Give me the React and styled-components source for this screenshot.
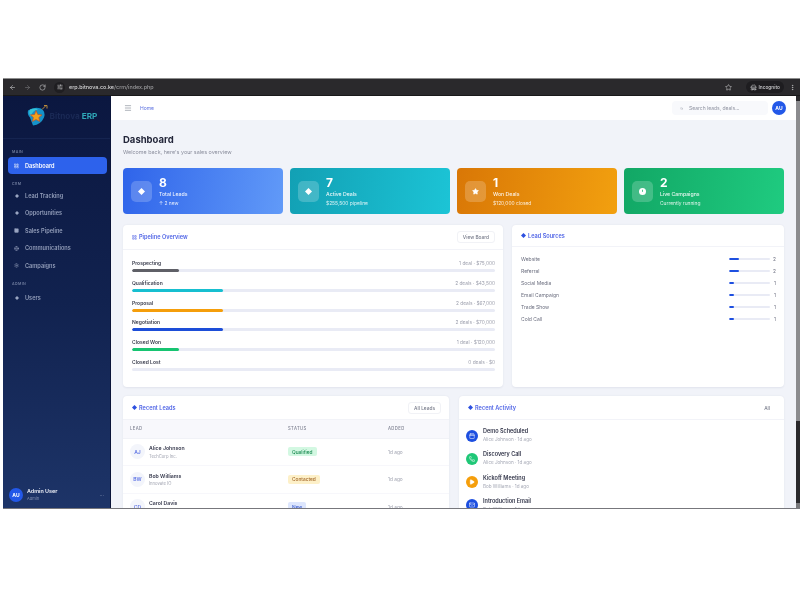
import styled, { createGlobalStyle } from 'styled-components'
import {
  ArrowLeft,
  ArrowRight,
  RotateCw,
  SlidersHorizontal,
  Star,
  HatGlasses,
  EllipsisVertical,
  LayoutGrid,
  Menu,
  Search,
  Play,
  Phone,
  Calendar,
  Mail,
  Globe,
  Settings,
  Square,
} from 'lucide-react'

const GlobalStyle = createGlobalStyle`
  html, body {
    margin: 0;
    background: #ffffff;
    font-family: Inter, "Liberation Sans", sans-serif;
  }
  * { box-sizing: border-box; }
`

const Screen = styled.div`
  width: 800px;
  height: 600px;
  padding: 78px 0 0 3px;
  overflow: hidden;
`

const Window = styled.div`
  width: 797px;
  height: 431px;
  display: flex;
  flex-direction: column;
  border-top: 1px solid #8d8d8d;
  border-bottom: 1px solid #77777c;
  overflow: hidden;
  filter: blur(0.35px);
`

const BrowserBar = styled.div`
  height: 17px;
  flex: none;
  display: flex;
  align-items: center;
  gap: 8px;
  padding: 0 4px 0 6px;
  background: #2a292c;
  border-bottom: 1px solid #19191a;
  color: #c9c9cb;
`

const NavIcon = styled.span`
  display: flex;
  width: 7px;
  color: ${(p) => (p.$dim ? '#77777a' : '#c9c9cb')};
`

const Address = styled.div`
  display: flex;
  align-items: center;
  gap: 4px;
  color: #d8d8da;
  font-size: 5.4px;
  font-weight: 500;
  flex: 1;
`

const SiteChip = styled.span`
  width: 11px;
  height: 11px;
  display: flex;
  align-items: center;
  justify-content: center;
  border-radius: 50%;
  background: #1f1e21;
`

const AddressPath = styled.span`
  color: #9a9a9d;
`

const IncognitoPill = styled.div`
  width: 38px;
  height: 12px;
  display: flex;
  align-items: center;
  gap: 2px;
  padding: 0 0 0 4px;
  margin: 0 -2.5px 0 5.5px;
  border-radius: 6px;
  background: #1e1d20;
  font-size: 4.8px;
  font-weight: 500;
  color: #d0d0d2;
  white-space: nowrap;

  svg {
    flex: none;
  }
`

const Body = styled.div`
  flex: 1;
  min-height: 0;
  display: flex;
`

const Sidebar = styled.aside`
  width: 108px;
  flex: none;
  display: flex;
  flex-direction: column;
  background: linear-gradient(180deg, #0b1740 0%, #11224f 50%, #1d3468 100%);
  border-right: 1px solid #0a1438;
`

const LogoRow = styled.div`
  height: 43px;
  flex: none;
  display: flex;
  align-items: center;
  justify-content: center;
  gap: 1px;
  padding: 0 0 3px 9px;
  border-bottom: 1px solid #152450;
`

const LogoText = styled.span`
  font-size: 8.2px;
  font-weight: 700;
  color: #1a2955;
`

const LogoAccent = styled.span`
  color: #2fa8b8;
`

const SectionLabel = styled.div`
  margin: ${(p) => p.$top}px 0 ${(p) => p.$bottom}px 9px;
  font-size: 3.6px;
  font-weight: 600;
  letter-spacing: 0.4px;
  color: #6f7c9e;
`

const NavList = styled.nav`
  display: flex;
  flex-direction: column;
  gap: 0.5px;
  padding: 0 3px 0 5px;
`

const NavItem = styled.div`
  height: 17px;
  display: flex;
  align-items: center;
  gap: 6px;
  padding-left: 6px;
  border-radius: 4px;
  font-size: 5.6px;
  font-weight: 600;
  color: ${(p) => (p.$active ? '#ffffff' : '#939eba')};
  background: ${(p) => (p.$active ? '#2d62ec' : 'transparent')};
`

const NavGlyph = styled.span`
  display: flex;
  width: 5px;
  justify-content: center;
`

const SidebarFoot = styled.div`
  margin-top: auto;
  height: 27px;
  display: flex;
  align-items: center;
  gap: 4px;
  padding: 0 6px;
`

const FootAvatar = styled.div`
  width: 14px;
  height: 14px;
  flex: none;
  border-radius: 50%;
  display: flex;
  align-items: center;
  justify-content: center;
  background: #2358e8;
  color: #ffffff;
  font-size: 5px;
  font-weight: 700;
`

const FootText = styled.div`
  flex: 1;
  display: flex;
  flex-direction: column;
  gap: 1.5px;
`

const FootName = styled.div`
  font-size: 5.4px;
  font-weight: 600;
  color: #eef1f8;
`

const FootRole = styled.div`
  font-size: 4px;
  color: #8492b4;
`

const FootDots = styled.div`
  font-size: 5px;
  color: #8492b4;
`

const Main = styled.main`
  flex: 1;
  min-width: 0;
  display: flex;
  flex-direction: column;
  background: #f1f3f9;
`

const TopBar = styled.header`
  height: 24px;
  flex: none;
  display: flex;
  align-items: center;
  gap: 4px;
  padding: 0 10px 0 13px;
  background: #ffffff;
  color: #8a8f9c;
`

const Crumb = styled.span`
  flex: 1;
  margin-left: 4px;
  font-size: 5px;
  color: #5a6fe0;
`

const SearchBox = styled.div`
  width: 96px;
  height: 14px;
  display: flex;
  align-items: center;
  gap: 6px;
  padding-left: 8px;
  border-radius: 4px;
  background: #f8f9fc;
  font-size: 5px;
  color: #8f93a1;
`

const Content = styled.div`
  flex: 1;
  min-height: 0;
  overflow: hidden;
  display: flex;
  flex-direction: column;
  padding: 14px 12px 0 12px;
`

const PageTitle = styled.h1`
  margin: 0;
  font-size: 9.5px;
  line-height: 12px;
  font-weight: 700;
  color: #23263a;
`

const PageSub = styled.p`
  margin: 3px 0 12px;
  font-size: 5.4px;
  line-height: 7px;
  color: #8a8d9c;
`

const StatGrid = styled.div`
  display: grid;
  grid-template-columns: repeat(4, 1fr);
  gap: 7px;
  margin-bottom: 11px;
`

const StatCard = styled.div`
  height: 46px;
  display: flex;
  align-items: center;
  gap: 7px;
  padding-left: 8px;
  border-radius: 4px;
  color: #ffffff;
  background: linear-gradient(100deg, ${(p) => p.$from}, ${(p) => p.$to});
`

const StatIcon = styled.div`
  width: 21px;
  height: 21px;
  flex: none;
  display: flex;
  align-items: center;
  justify-content: center;
  border-radius: 5px;
  background: rgba(255, 255, 255, 0.2);
`

const StatText = styled.div`
  display: flex;
  flex-direction: column;
`

const StatNumber = styled.div`
  font-size: 12px;
  line-height: 14px;
  font-weight: 700;
`

const StatLabel = styled.div`
  margin-top: 1px;
  font-size: 5.2px;
  line-height: 7px;
  font-weight: 500;
  opacity: 0.9;
`

const StatNote = styled.div`
  margin-top: 2px;
  font-size: 4.9px;
  line-height: 7px;
  opacity: 0.85;
`

const Row = styled.div`
  display: grid;
  grid-template-columns: ${(p) => p.$columns};
  gap: ${(p) => p.$gap}px;
  margin-bottom: 9px;
`

const Card = styled.section`
  height: ${(p) => p.$height || 'auto'};
  border-radius: 4px;
  background: #ffffff;
  box-shadow: 0 0.5px 2px rgba(40, 50, 90, 0.08);
  overflow: hidden;
`

const CardHead = styled.div`
  height: ${(p) => p.$height || 24}px;
  display: flex;
  align-items: center;
  justify-content: space-between;
  padding: 0 8px 0 9px;
  border-bottom: 1px solid #f2f3f8;
`

const CardTitle = styled.div`
  display: flex;
  align-items: center;
  gap: 2px;
  font-size: 5.6px;
  font-weight: 600;
  color: #4f64e6;
`

const GhostButton = styled.div`
  height: 12px;
  display: flex;
  align-items: center;
  padding: 0 5px;
  border: 1px solid ${(p) => (p.$plain ? 'transparent' : '#f1f2f6')};
  border-radius: 3px;
  font-size: 4.8px;
  font-weight: 500;
  color: #777b8a;
`

const PipelineBody = styled.div`
  display: flex;
  flex-direction: column;
  gap: 6.8px;
  padding: 9px 8px 0 9px;
`

const StageTop = styled.div`
  display: flex;
  justify-content: space-between;
  align-items: center;
  height: 8px;
  margin-bottom: 2px;
`

const StageName = styled.span`
  font-size: 5px;
  font-weight: 600;
  color: #3a3d4d;
`

const StageInfo = styled.span`
  font-size: 4.8px;
  color: #9a9dab;
`

const Track = styled.div`
  height: ${(p) => p.$height || 3}px;
  border-radius: 2px;
  background: #e9ebf5;
  overflow: hidden;
`

const Fill = styled.div`
  height: 100%;
  border-radius: 2px;
  background: ${(p) => p.$color};
`

const SourceList = styled.div`
  display: flex;
  flex-direction: column;
  gap: 4px;
  padding: 8px 8px 0 9px;
`

const SourceRow = styled.div`
  height: 8px;
  display: flex;
  align-items: center;
  font-size: 5px;
  color: #6d7080;
`

const SourceName = styled.span`
  flex: 1;
`

const SourceTrack = styled(Track)`
  width: 41px;
`

const SourceCount = styled.span`
  width: 6px;
  text-align: right;
  font-size: 4.8px;
`

const Table = styled.table`
  width: 100%;
  border-collapse: collapse;
  table-layout: fixed;
`

const HeadCell = styled.th`
  height: 18px;
  padding: 0 0 0 ${(p) => p.$pad || 0}px;
  width: ${(p) => p.$width || 'auto'};
  text-align: left;
  font-size: 4.2px;
  font-weight: 500;
  letter-spacing: 0.4px;
  color: #7f8292;
  background: #f8f8fc;
  border-bottom: 1px solid #f1f2f7;
`

const Cell = styled.td`
  height: 27.5px;
  padding: 0 0 0 ${(p) => p.$pad || 0}px;
  font-size: 4.8px;
  color: #a0a3b0;
  border-bottom: 1px solid #f7f7fb;
`

const LeadCell = styled.div`
  display: flex;
  align-items: center;
  gap: 4px;
`

const LeadAvatar = styled.div`
  width: 15px;
  height: 15px;
  flex: none;
  display: flex;
  align-items: center;
  justify-content: center;
  border-radius: 50%;
  background: #f3f5fb;
  font-size: 5px;
  font-weight: 600;
  color: #5c72e4;
`

const LeadName = styled.div`
  font-size: 5.2px;
  line-height: 7px;
  font-weight: 600;
  color: #33364a;
`

const LeadCompany = styled.div`
  margin-top: 1.5px;
  font-size: 4.2px;
  line-height: 5px;
  color: #a0a3b0;
`

const Badge = styled.span`
  display: inline-flex;
  align-items: center;
  height: 9px;
  padding: 0 4px;
  border-radius: 2px;
  font-size: 4.8px;
  font-weight: 500;
  background: ${(p) => p.$bg};
  color: ${(p) => p.$color};
`

const ActivityList = styled.div`
  display: flex;
  flex-direction: column;
  gap: 5.3px;
  padding: 6.5px 9px 0 7px;
`

const ActivityItem = styled.div`
  height: 18px;
  display: flex;
  align-items: center;
  gap: 5px;
`

const ActivityDot = styled.div`
  width: 12px;
  height: 12px;
  flex: none;
  display: flex;
  align-items: center;
  justify-content: center;
  border-radius: 50%;
  background: ${(p) => p.$color};
  color: #ffffff;
`

const ActivityTitle = styled.div`
  font-size: 5.5px;
  line-height: 7px;
  font-weight: 600;
  color: #33364a;
`

const ActivityMeta = styled.div`
  margin-top: 2px;
  font-size: 4.6px;
  line-height: 6px;
  color: #a5a8b5;
`

const Scrollbar = styled.div`
  width: 4px;
  flex: none;
  display: flex;
  flex-direction: column;
  padding-top: 5px;
  background: #2a292c;
`

const ScrollThumb = styled.div`
  height: 320px;
  background: #8b8b8e;
`

const ScrollEnd = styled.div`
  height: 5px;
  margin-top: auto;
  background: #77777a;
`

const stats = [
  { n: '8', label: 'Total Leads', note: '↑ 2 new', from: '#2f64ea', to: '#619af8', icon: 'diamond' },
  { n: '7', label: 'Active Deals', note: '$255,500 pipeline', from: '#12a0b4', to: '#1cc4d6', icon: 'diamond' },
  { n: '1', label: 'Won Deals', note: '$120,000 closed', from: '#d97706', to: '#f2a00f', icon: 'star' },
  { n: '2', label: 'Live Campaigns', note: 'Currently running', from: '#12a765', to: '#1fcb80', icon: 'clock' },
]

const stages = [
  { name: 'Prospecting', info: '1 deal · $75,000', pct: 13, color: '#5f6067' },
  { name: 'Qualification', info: '2 deals · $43,500', pct: 25, color: '#17bfd0' },
  { name: 'Proposal', info: '2 deals · $67,000', pct: 25, color: '#f59e0b' },
  { name: 'Negotiation', info: '2 deals · $70,000', pct: 25, color: '#1d4ed8' },
  { name: 'Closed Won', info: '1 deal · $120,000', pct: 13, color: '#17c471' },
  { name: 'Closed Lost', info: '0 deals · $0', pct: 0, color: '#5f6067' },
]

const sources = [
  { name: 'Website', count: 2, pct: 25 },
  { name: 'Referral', count: 2, pct: 25 },
  { name: 'Social Media', count: 1, pct: 13 },
  { name: 'Email Campaign', count: 1, pct: 13 },
  { name: 'Trade Show', count: 1, pct: 13 },
  { name: 'Cold Call', count: 1, pct: 13 },
]

const leads = [
  { initials: 'AJ', name: 'Alice Johnson', company: 'TechCorp Inc.', status: 'Qualified', bg: '#d3f8e2', color: '#1b8a52' },
  { initials: 'BW', name: 'Bob Williams', company: 'Innovate IO', status: 'Contacted', bg: '#fdf0c8', color: '#a5692a' },
  { initials: 'CD', name: 'Carol Davis', company: 'Startup Co', status: 'New', bg: '#dde6fd', color: '#3f5fd0' },
]

const activity = [
  { title: 'Demo Scheduled', meta: 'Alice Johnson · 1d ago', color: '#1d4fe0', icon: Calendar },
  { title: 'Discovery Call', meta: 'Alice Johnson · 1d ago', color: '#1fc777', icon: Phone },
  { title: 'Kickoff Meeting', meta: 'Bob Williams · 1d ago', color: '#f59e0b', icon: Play, solid: true },
  { title: 'Introduction Email', meta: 'Bob Williams · 1d ago', color: '#1d4fe0', icon: Mail },
]

function DiamondMark({ size = 5, color = '#ffffff' }) {
  return (
    <svg width={size} height={size} viewBox="0 0 10 10">
      <path d="M5 0 L10 5 L5 10 L0 5 Z" fill={color} />
    </svg>
  )
}

function StatGlyph({ type }) {
  if (type === 'star') return <Star size={7} fill="#ffffff" color="#ffffff" />
  if (type === 'clock') {
    return (
      <svg width="7" height="7" viewBox="0 0 10 10">
        <circle cx="5" cy="5" r="5" fill="#ffffff" />
        <path d="M5 2.5 V5.5" stroke="#2fb97c" strokeWidth="1.2" />
      </svg>
    )
  }
  return <DiamondMark size={7} />
}

function Logo() {
  return (
    <svg width="24" height="23" viewBox="0 0 24 22">
      <path d="M3 6 Q9 2 16 4 Q21 7 19 13 Q16 20 8 21 Q6 16 5 13 Q2 10 3 6 Z" fill="#1592c9" />
      <path d="M5 5 Q11 3 13 5 Q7 6 6 12 Q3 9 5 5 Z" fill="#35c4d8" />
      <path d="M11 6 L12.8 10 L17 10.4 L13.8 13 L14.8 17 L11 15 L7.4 17 L8.4 13 L5.4 10.4 L9.6 10 Z" fill="#f3a11b" stroke="#c8451f" strokeWidth="0.6" />
      <path d="M17 5 L21 1 M19 1 H22 V4" stroke="#b98a3c" strokeWidth="1" fill="none" />
    </svg>
  )
}

export default function App() {
  return (
    <Screen>
      <GlobalStyle />
      <Window>
        <BrowserBar>
          <NavIcon><ArrowLeft size={7} /></NavIcon>
          <NavIcon $dim><ArrowRight size={7} /></NavIcon>
          <NavIcon><RotateCw size={7} /></NavIcon>
          <Address>
            <SiteChip><SlidersHorizontal size={6} /></SiteChip>
            <span>erp.bitnova.co.ke<AddressPath>/crm/index.php</AddressPath></span>
          </Address>
          <Star size={7} />
          <IncognitoPill>
            <HatGlasses size={7} />
            Incognito
          </IncognitoPill>
          <EllipsisVertical size={7} />
        </BrowserBar>
        <Body>
          <Sidebar>
            <LogoRow>
              <Logo />
              <LogoText>Bitnova <LogoAccent>ERP</LogoAccent></LogoText>
            </LogoRow>
            <SectionLabel $top={11} $bottom={3}>MAIN</SectionLabel>
            <NavList>
              <NavItem $active><NavGlyph><LayoutGrid size={6} /></NavGlyph>Dashboard</NavItem>
            </NavList>
            <SectionLabel $top={8} $bottom={1}>CRM</SectionLabel>
            <NavList>
              <NavItem><NavGlyph><DiamondMark size={4} color="#9aa5c2" /></NavGlyph>Lead Tracking</NavItem>
              <NavItem><NavGlyph><DiamondMark size={4} color="#9aa5c2" /></NavGlyph>Opportunities</NavItem>
              <NavItem><NavGlyph><Square size={5} fill="#9aa5c2" /></NavGlyph>Sales Pipeline</NavItem>
              <NavItem><NavGlyph><Globe size={5} /></NavGlyph>Communications</NavItem>
              <NavItem><NavGlyph><Settings size={5} /></NavGlyph>Campaigns</NavItem>
            </NavList>
            <SectionLabel $top={8} $bottom={3}>ADMIN</SectionLabel>
            <NavList>
              <NavItem><NavGlyph><DiamondMark size={4} color="#9aa5c2" /></NavGlyph>Users</NavItem>
            </NavList>
            <SidebarFoot>
              <FootAvatar>AU</FootAvatar>
              <FootText>
                <FootName>Admin User</FootName>
                <FootRole>Admin</FootRole>
              </FootText>
              <FootDots>···</FootDots>
            </SidebarFoot>
          </Sidebar>
          <Main>
            <TopBar>
              <Menu size={8} />
              <Crumb>Home</Crumb>
              <SearchBox>
                <Search size={3} />
                Search leads, deals...
              </SearchBox>
              <FootAvatar>AU</FootAvatar>
            </TopBar>
            <Content>
              <PageTitle>Dashboard</PageTitle>
              <PageSub>Welcome back, here's your sales overview</PageSub>
              <StatGrid>
                {stats.map((s) => (
                  <StatCard key={s.label} $from={s.from} $to={s.to}>
                    <StatIcon><StatGlyph type={s.icon} /></StatIcon>
                    <StatText>
                      <StatNumber>{s.n}</StatNumber>
                      <StatLabel>{s.label}</StatLabel>
                      <StatNote>{s.note}</StatNote>
                    </StatText>
                  </StatCard>
                ))}
              </StatGrid>
              <Row $columns="380px 272px" $gap={9}>
                <Card $height="162px">
                  <CardHead $height={25}>
                    <CardTitle><LayoutGrid size={5} />Pipeline Overview</CardTitle>
                    <GhostButton>View Board</GhostButton>
                  </CardHead>
                  <PipelineBody>
                    {stages.map((s) => (
                      <div key={s.name}>
                        <StageTop>
                          <StageName>{s.name}</StageName>
                          <StageInfo>{s.info}</StageInfo>
                        </StageTop>
                        <Track><Fill $color={s.color} style={{ width: `${s.pct}%` }} /></Track>
                      </div>
                    ))}
                  </PipelineBody>
                </Card>
                <Card $height="162px">
                  <CardHead $height={22}>
                    <CardTitle><DiamondMark size={5} color="#2d50e0" />Lead Sources</CardTitle>
                  </CardHead>
                  <SourceList>
                    {sources.map((s) => (
                      <SourceRow key={s.name}>
                        <SourceName>{s.name}</SourceName>
                        <SourceTrack $height={2}><Fill $color="#1d4fe0" style={{ width: `${s.pct}%` }} /></SourceTrack>
                        <SourceCount>{s.count}</SourceCount>
                      </SourceRow>
                    ))}
                  </SourceList>
                </Card>
              </Row>
              <Row $columns="326px 325px" $gap={10}>
                <Card>
                  <CardHead>
                    <CardTitle><DiamondMark size={5} color="#2d50e0" />Recent Leads</CardTitle>
                    <GhostButton>All Leads</GhostButton>
                  </CardHead>
                  <Table>
                    <thead>
                      <tr>
                        <HeadCell $pad={7} $width="165px">LEAD</HeadCell>
                        <HeadCell $width="100px">STATUS</HeadCell>
                        <HeadCell>ADDED</HeadCell>
                      </tr>
                    </thead>
                    <tbody>
                      {leads.map((l) => (
                        <tr key={l.name}>
                          <Cell $pad={7}>
                            <LeadCell>
                              <LeadAvatar>{l.initials}</LeadAvatar>
                              <div>
                                <LeadName>{l.name}</LeadName>
                                <LeadCompany>{l.company}</LeadCompany>
                              </div>
                            </LeadCell>
                          </Cell>
                          <Cell><Badge $bg={l.bg} $color={l.color}>{l.status}</Badge></Cell>
                          <Cell>1d ago</Cell>
                        </tr>
                      ))}
                    </tbody>
                  </Table>
                </Card>
                <Card>
                  <CardHead>
                    <CardTitle><DiamondMark size={5} color="#2d50e0" />Recent Activity</CardTitle>
                    <GhostButton $plain>All</GhostButton>
                  </CardHead>
                  <ActivityList>
                    {activity.map((a) => (
                      <ActivityItem key={a.title}>
                        <ActivityDot $color={a.color}>
                          <a.icon size={6} fill={a.solid ? '#ffffff' : 'none'} />
                        </ActivityDot>
                        <div>
                          <ActivityTitle>{a.title}</ActivityTitle>
                          <ActivityMeta>{a.meta}</ActivityMeta>
                        </div>
                      </ActivityItem>
                    ))}
                  </ActivityList>
                </Card>
              </Row>
            </Content>
          </Main>
          <Scrollbar>
            <ScrollThumb />
            <ScrollEnd />
          </Scrollbar>
        </Body>
      </Window>
    </Screen>
  )
}
